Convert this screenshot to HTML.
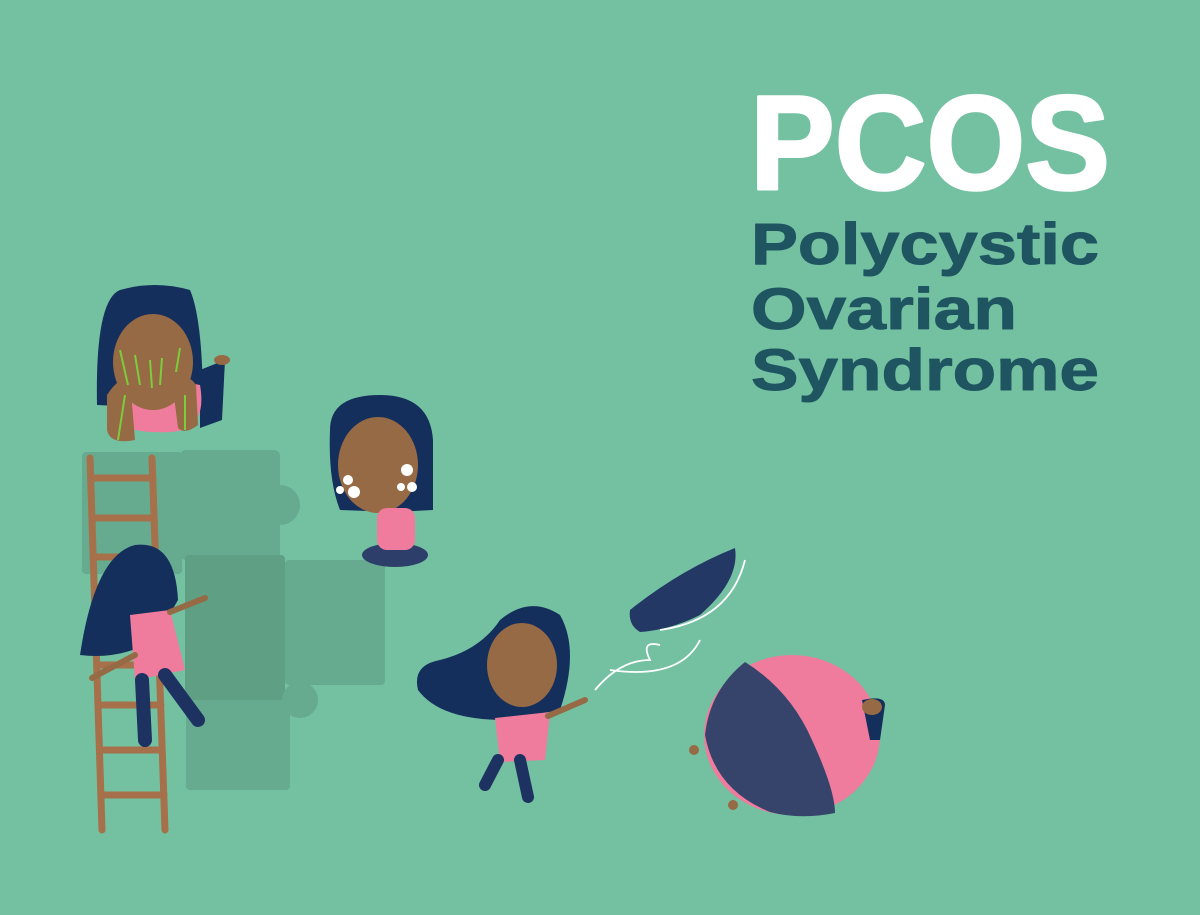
<!DOCTYPE html>
<html><head><meta charset="utf-8"><style>
html,body{margin:0;padding:0;background:#74c1a2;}
svg{display:block}
</style></head><body>
<svg width="1200" height="915" viewBox="0 0 1200 915" xmlns="http://www.w3.org/2000/svg">
<rect width="1200" height="915" fill="#74c1a2"/>
<!-- Title -->
<text x="750" y="189" font-family="Liberation Sans, sans-serif" font-weight="bold" font-size="134" fill="#ffffff" stroke="#ffffff" stroke-width="3" stroke-linejoin="round" textLength="360" lengthAdjust="spacingAndGlyphs">PCOS</text>
<g font-family="Liberation Sans, sans-serif" font-weight="bold" font-size="58" fill="#1f5561" stroke="#1f5561" stroke-width="1" stroke-linejoin="round">
<text x="751" y="264" textLength="348" lengthAdjust="spacingAndGlyphs">Polycystic</text>
<text x="751" y="329" textLength="266" lengthAdjust="spacingAndGlyphs">Ovarian</text>
<text x="751" y="390" textLength="348" lengthAdjust="spacingAndGlyphs">Syndrome</text>
</g>

<!-- puzzle -->
<g fill="#66ab8f">
<rect x="82" y="452" width="100" height="122" rx="4"/>
<rect x="180" y="450" width="100" height="110" rx="6"/>
<rect x="260" y="485" width="40" height="40" rx="20"/>
<rect x="185" y="555" width="100" height="150" rx="4" fill="#5f9f83"/>
<rect x="285" y="560" width="100" height="125" rx="4"/>
<rect x="186" y="700" width="104" height="90" rx="4"/>
<circle cx="300" cy="700" r="18"/>
</g>
<!-- ladder -->
<g stroke="#a5704a" stroke-width="7" stroke-linecap="round" fill="none">
<line x1="90" y1="458" x2="102" y2="830"/>
<line x1="152" y1="458" x2="165" y2="830"/>
<line x1="92" y1="478" x2="153" y2="478"/>
<line x1="94" y1="518" x2="154" y2="518"/>
<line x1="95" y1="557" x2="156" y2="557"/>
<line x1="97" y1="620" x2="158" y2="620"/>
<line x1="98" y1="665" x2="159" y2="665"/>
<line x1="99" y1="705" x2="161" y2="705"/>
<line x1="100" y1="750" x2="162" y2="750"/>
<line x1="101" y1="795" x2="164" y2="795"/>
</g>

<!-- figure 1 -->
<path d="M97 405 Q95 300 120 290 Q155 280 190 290 Q203 320 203 410 Z" fill="#152f5c"/>
<path d="M200 370 L225 360 L222 420 L200 428 Z" fill="#152f5c"/>
<ellipse cx="222" cy="360" rx="8" ry="5" fill="#966a44"/>
<path d="M115 385 Q155 375 200 385 Q208 430 170 432 Q130 434 112 420 Z" fill="#ef7c9c"/>
<ellipse cx="153" cy="362" rx="40" ry="48" fill="#966a44"/>
<path d="M107 395 Q120 375 130 380 L135 440 Q110 445 107 430 Z" fill="#966a44"/>
<path d="M172 380 Q188 372 196 385 L198 425 Q185 435 178 428 Z" fill="#966a44"/>
<g stroke="#7ccc3c" stroke-width="2" fill="none">
<path d="M120 350 L128 385 M135 355 L140 385 M150 360 L152 388 M162 358 L160 385 M180 348 L176 372 M125 395 L118 440 M185 395 L185 430"/>
</g>

<!-- figure 2 seated -->
<path d="M330 430 Q330 395 380 395 Q430 395 433 440 L433 510 L395 512 L340 510 Q328 480 330 430 Z" fill="#152f5c"/>
<ellipse cx="378" cy="465" rx="40" ry="48" fill="#966a44"/>
<ellipse cx="395" cy="555" rx="33" ry="12" fill="#2e3e6a"/>
<rect x="377" y="508" width="38" height="42" rx="10" fill="#ef7c9c"/>
<g fill="#fff"><circle cx="348" cy="480" r="5"/><circle cx="354" cy="492" r="6"/><circle cx="340" cy="490" r="4"/><circle cx="407" cy="470" r="6"/><circle cx="412" cy="487" r="5"/><circle cx="401" cy="487" r="4"/></g>

<!-- climbing figure -->
<path d="M178 600 Q175 540 135 545 Q95 555 80 655 Q120 660 155 640 Z" fill="#152f5c"/>
<path d="M130 615 L170 610 L185 670 L135 680 Z" fill="#ef7c9c"/>
<path d="M170 612 L205 598" stroke="#966a44" stroke-width="6" stroke-linecap="round"/>
<path d="M135 655 L92 678" stroke="#966a44" stroke-width="6" stroke-linecap="round"/>
<path d="M142 680 L145 740 M165 675 L198 720" stroke="#1e3262" stroke-width="14" stroke-linecap="round"/>

<!-- running figure -->
<path d="M440 660 Q480 650 500 620 Q530 595 560 615 Q580 650 560 710 L505 720 Q440 720 418 690 Q412 665 440 660 Z" fill="#152f5c"/>
<ellipse cx="522" cy="665" rx="35" ry="42" fill="#966a44"/>
<path d="M495 718 L550 712 L545 760 L500 762 Z" fill="#ef7c9c"/>
<path d="M548 716 L585 700" stroke="#966a44" stroke-width="6" stroke-linecap="round"/>
<path d="M498 760 L485 785 M520 760 L528 797" stroke="#1e3262" stroke-width="12" stroke-linecap="round"/>

<!-- flying hair -->
<path d="M630 610 Q680 570 735 548 Q740 580 700 615 Q670 630 640 632 Q628 625 630 610 Z" fill="#243866"/>
<path d="M595 690 Q620 660 650 660 Q640 640 660 645 M610 670 Q680 680 700 640 M660 630 Q730 620 745 560" stroke="#fff" stroke-width="1.8" fill="none"/>

<!-- ball -->
<ellipse cx="792" cy="735" rx="88" ry="80" fill="#ef7c9c"/>
<path d="M745 662 Q790 690 812 740 Q835 790 835 813 Q800 820 770 812 Q715 790 705 735 Q710 690 745 662 Z" fill="#36446c"/>
<path d="M862 700 Q885 695 885 705 L880 740 L870 740 Z" fill="#152f5c"/>
<ellipse cx="872" cy="707" rx="10" ry="8" fill="#966a44"/>
<circle cx="694" cy="750" r="5" fill="#966a44"/>
<circle cx="733" cy="805" r="5" fill="#966a44"/>
</svg>
</body></html>
